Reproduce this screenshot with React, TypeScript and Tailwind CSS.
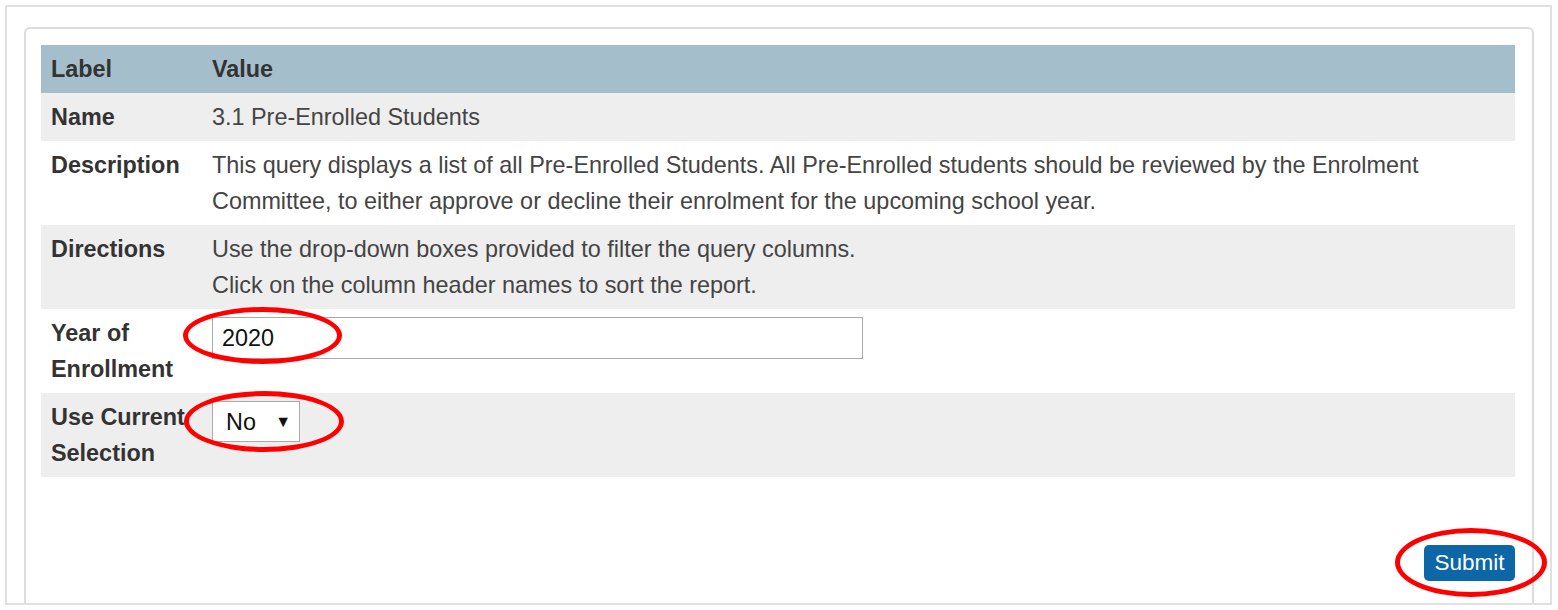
import React from "react";

type Row = {
  label: string;
  value: React.ReactNode;
  shaded: boolean;
};

const Ring = ({ className }: { className: string }) => (
  <div
    className={
      "pointer-events-none absolute rounded-[50%] border-[5px] border-[#f00] " +
      className
    }
  />
);

export default function App() {
  const rows: Row[] = [
    { label: "Name", value: "3.1 Pre-Enrolled Students", shaded: true },
    {
      label: "Description",
      value: (
        <>
          This query displays a list of all Pre-Enrolled Students. All
          Pre-Enrolled students should be reviewed by the Enrolment
          <br />
          Committee, to either approve or decline their enrolment for the
          upcoming school year.
        </>
      ),
      shaded: false,
    },
    {
      label: "Directions",
      value: (
        <>
          Use the drop-down boxes provided to filter the query columns.
          <br />
          Click on the column header names to sort the report.
        </>
      ),
      shaded: true,
    },
    {
      label: "Year of Enrollment",
      value: (
        <div className="mt-[2px] flex h-[42px] w-[651px] items-center border border-[#a9a9a9] bg-white pl-[9px] text-[#111]">
          2020
        </div>
      ),
      shaded: false,
    },
    {
      label: "Use Current Selection",
      value: (
        <div className="mt-[2px] flex h-[41px] w-[88px] items-center justify-between border border-[#a9a9a9] bg-white pl-[13px] pr-[8px] text-[#111]">
          <span>No</span>
          <span className="text-[16px] leading-none">▼</span>
        </div>
      ),
      shaded: true,
    },
  ];

  return (
    <div
      className="relative h-[610px] w-[1558px] bg-white pl-[5px] pt-[5px] text-[23.4px] text-[#444]"
      style={{ fontFamily: '"Liberation Sans", Arial, sans-serif' }}
    >
      <div className="h-[600px] w-[1547px] overflow-hidden border-2 border-[#e0e0e0] pl-[17px] pt-[20px]">
        <div className="h-[620px] w-[1510px] rounded-t-[6px] border-2 border-[#dcdcdc] pl-[15px] pr-[15px] pt-[16px]">
          <div className="w-[1474px]">
            <div className="flex bg-[#a4bfcb] font-bold text-[#333]">
              <div className="w-[161px] shrink-0 px-[10px] py-[6px] leading-[36px]">
                Label
              </div>
              <div className="flex-1 px-[10px] py-[6px] leading-[36px]">
                Value
              </div>
            </div>
            {rows.map((row) => (
              <div
                key={row.label}
                className={"flex " + (row.shaded ? "bg-[#eeeeee]" : "bg-white")}
              >
                <div className="w-[161px] shrink-0 px-[10px] py-[6px] font-bold leading-[36px] text-[#333]">
                  {row.label}
                </div>
                <div className="flex-1 px-[10px] py-[6px] leading-[36px]">
                  {row.value}
                </div>
              </div>
            ))}
          </div>
          <div className="mt-[68px] flex w-[1474px] justify-end">
            <button
              type="button"
              className="h-[36px] w-[91px] rounded-[5px] bg-[#0d67a7] text-[22.5px] text-white"
            >
              Submit
            </button>
          </div>
        </div>
      </div>

      <Ring className="left-[183px] top-[307px] h-[57px] w-[159px]" />
      <Ring className="left-[184px] top-[391px] h-[61px] w-[160px]" />
      <Ring className="left-[1395px] top-[528px] h-[69px] w-[152px]" />
    </div>
  );
}
